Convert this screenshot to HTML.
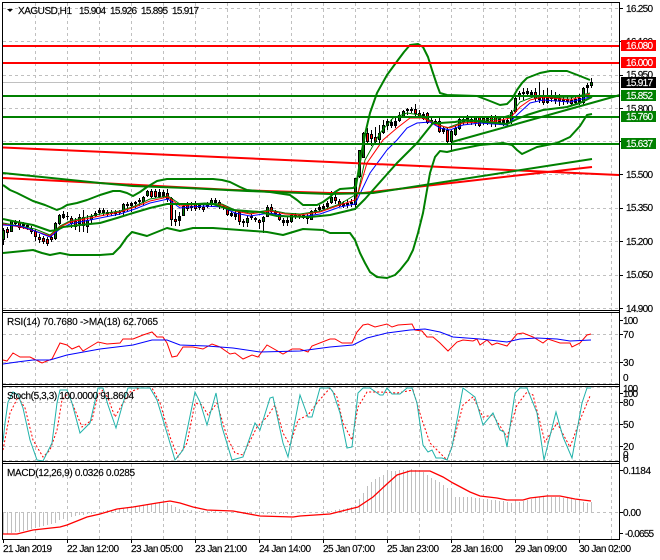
<!DOCTYPE html>
<html><head><meta charset="utf-8"><style>
html,body{margin:0;padding:0;background:#fff;width:660px;height:560px;overflow:hidden}
svg{display:block}
text{font-family:"Liberation Sans",sans-serif;font-size:10px;fill:#000;stroke:#000;stroke-width:.15}
.w{fill:#fff;stroke:#fff}
</style></head><body>
<svg width="660" height="560" viewBox="0 0 660 560" xmlns="http://www.w3.org/2000/svg">
<rect width="660" height="560" fill="#fff"/>
<!-- grid -->
<g fill="none" stroke="#c0c0c0" stroke-dasharray="3 3" shape-rendering="crispEdges">
<path d="M35.5 3V310M67.5 3V310M99.5 3V310M131.5 3V310M163.5 3V310M195.5 3V310M227.5 3V310M259.5 3V310M291.5 3V310M323.5 3V310M355.5 3V310M387.5 3V310M419.5 3V310M451.5 3V310M483.5 3V310M515.5 3V310M547.5 3V310M579.5 3V310M611.5 3V310"/>
<path d="M35.5 313V384M67.5 313V384M99.5 313V384M131.5 313V384M163.5 313V384M195.5 313V384M227.5 313V384M259.5 313V384M291.5 313V384M323.5 313V384M355.5 313V384M387.5 313V384M419.5 313V384M451.5 313V384M483.5 313V384M515.5 313V384M547.5 313V384M579.5 313V384M611.5 313V384"/>
<path d="M35.5 387V461M67.5 387V461M99.5 387V461M131.5 387V461M163.5 387V461M195.5 387V461M227.5 387V461M259.5 387V461M291.5 387V461M323.5 387V461M355.5 387V461M387.5 387V461M419.5 387V461M451.5 387V461M483.5 387V461M515.5 387V461M547.5 387V461M579.5 387V461M611.5 387V461"/>
<path d="M35.5 464V539M67.5 464V539M99.5 464V539M131.5 464V539M163.5 464V539M195.5 464V539M227.5 464V539M259.5 464V539M291.5 464V539M323.5 464V539M355.5 464V539M387.5 464V539M419.5 464V539M451.5 464V539M483.5 464V539M515.5 464V539M547.5 464V539M579.5 464V539M611.5 464V539"/>
<path d="M3 8.5H619M3 41.5H619M3 75.5H619M3 108.5H619M3 141.5H619M3 174.5H619M3 208.5H619M3 241.5H619M3 275.5H619M3 308.5H619"/>
<path d="M3 334.5H619M3 362.5H619M3 383.5H619"/>
<path d="M3 402.5H619M3 424.5H619M3 446.5H619M3 387.5H619M3 460.5H619"/>
<path d="M3 512.5H619"/>
</g>
<path d="M3 82.5H619" stroke="#c0c0c0" fill="none" shape-rendering="crispEdges"/>
<!-- candles wicks -->
<path shape-rendering="crispEdges" stroke="#000" fill="none" d="M3.5 228V245M7.5 227V238M11.5 220V232M15.5 220V226M19.5 220V230M23.5 222V229M27.5 223V230M31.5 226V234M35.5 229V241M39.5 234V243M43.5 236V244M47.5 237V246M51.5 235V242M55.5 222V240M59.5 214V225M63.5 211V219M67.5 212V220M71.5 216V228M75.5 218V230M79.5 214V232M83.5 210V232M87.5 215V233M91.5 214V224M95.5 211V217M99.5 208V215M103.5 208V216M107.5 210V217M111.5 210V216M115.5 210V216M119.5 210V215M123.5 203V217M127.5 202V212M131.5 202V212M135.5 201V208M139.5 198V206M143.5 196V205M147.5 190V197M151.5 189V198M155.5 189V198M159.5 189V198M163.5 190V198M167.5 189V202M171.5 197V226M175.5 210V226M179.5 212V226M183.5 204V216M187.5 202V211M191.5 202V211M195.5 201V211M199.5 203V210M203.5 205V212M207.5 202V208M211.5 198V207M215.5 198V205M219.5 200V209M223.5 205V210M227.5 206V216M231.5 211V217M235.5 211V220M239.5 210V225M243.5 219V227M247.5 216V227M251.5 214V220M255.5 217V222M259.5 219V229M263.5 216V233M267.5 205V217M271.5 204V214M275.5 210V216M279.5 212V221M283.5 218V226M287.5 217V226M291.5 214V223M295.5 213V219M299.5 214V219M303.5 214V219M307.5 214V224M311.5 210V220M315.5 208V214M319.5 205V212M323.5 204V210M327.5 201V208M331.5 191V204M335.5 191V204M339.5 199V207M343.5 201V208M347.5 200V208M351.5 199V207M355.5 178V210M359.5 150V178M363.5 132V158M367.5 128V145M371.5 130V146M375.5 127V144M379.5 125V143M383.5 120V134M387.5 119V130M391.5 119V128M395.5 117V128M399.5 112V122M403.5 110V118M407.5 108V115M411.5 107V113M415.5 104V116M419.5 110V118M423.5 112V120M427.5 112V124M431.5 118V124M435.5 119V125M439.5 118V133M443.5 126V134M447.5 128V144M451.5 130V152M455.5 126V136M459.5 118V130M463.5 116V125M467.5 115V124M471.5 117V125M475.5 116V126M479.5 116V127M483.5 116V125M487.5 116V125M491.5 115V127M495.5 115V127M499.5 117V125M503.5 118V126M507.5 118V126M511.5 110V124M515.5 97V113M519.5 91V100M523.5 88V100M527.5 88V97M531.5 90V98M535.5 88V102M539.5 82V103M543.5 90V105M547.5 88V104M551.5 90V102M555.5 92V104M559.5 94V106M563.5 95V105M567.5 95V104M571.5 96V105M575.5 95V105M579.5 94V105M583.5 87V105M587.5 83V93M591.5 78V88"/>
<!-- candle bodies -->
<path shape-rendering="crispEdges" stroke="#000" stroke-width="3" fill="none" d="M3.5 230V240M7.5 229V233M11.5 221V232M15.5 222V224M19.5 222V228M23.5 224V226M27.5 225V227M31.5 228V232M35.5 231V237M39.5 237V240M43.5 238V242M47.5 239V244M51.5 237V240M55.5 223V239M59.5 215V224M63.5 214V218M67.5 216V217M71.5 218V224M75.5 221V227M79.5 217V224M83.5 217V226M87.5 220V227M91.5 216V220M95.5 213V216M99.5 210V213M103.5 210V213M107.5 212V214M111.5 212V214M115.5 212V214M119.5 212V213M123.5 204V212M127.5 204V206M131.5 203V206M135.5 202V204M139.5 200V202M143.5 197V202M147.5 191V196M151.5 191V197M155.5 191V197M159.5 192V197M163.5 192V197M167.5 193V199M171.5 198V220M175.5 219V222M179.5 216V221M183.5 206V216M187.5 205V209M191.5 206V208M195.5 204V209M199.5 205V208M203.5 207V210M207.5 204V207M211.5 200V205M215.5 200V203M219.5 202V207M223.5 206V208M227.5 207V215M231.5 213V216M235.5 213V217M239.5 212V222M243.5 221V223M247.5 218V223M251.5 216V218M255.5 218V220M259.5 220V223M263.5 217V222M267.5 207V217M271.5 207V212M275.5 211V214M279.5 214V220M283.5 220V223M287.5 220V223M291.5 215V222M295.5 215V217M299.5 215V217M303.5 215V218M307.5 217V219M311.5 211V220M315.5 210V213M319.5 207V210M323.5 206V209M327.5 203V207M331.5 197V203M335.5 197V201M339.5 201V206M343.5 203V206M347.5 203V205M351.5 202V204M355.5 178V205M359.5 150V177M363.5 133V158M367.5 133V142M371.5 134V139M375.5 137V142M379.5 133V140M383.5 125V133M387.5 121V126M391.5 122V126M395.5 121V126M399.5 115V121M403.5 111V117M407.5 109V111M411.5 109V111M415.5 109V114M419.5 113V117M423.5 114V119M427.5 113V123M431.5 120V122M435.5 121V123M439.5 121V132M443.5 128V132M447.5 130V142M451.5 131V142M455.5 128V135M459.5 119V129M463.5 119V122M467.5 118V121M471.5 119V122M475.5 117V123M479.5 117V126M483.5 118V123M487.5 118V123M491.5 116V123M495.5 116V124M499.5 118V123M503.5 120V123M507.5 120V123M511.5 112V122M515.5 98V112M519.5 93V97M523.5 92V94M527.5 91V94M531.5 92V96M535.5 92V99M539.5 95V100M543.5 95V103M547.5 96V103M551.5 95V99M555.5 97V101M559.5 98V101M563.5 99V101M567.5 99V102M571.5 100V104M575.5 99V103M579.5 98V103M583.5 88V103M587.5 85V88M591.5 82V86"/>
<path shape-rendering="crispEdges" stroke="#008000" fill="none" d="M3.5 231V239M11.5 222V231M55.5 224V238M59.5 216V223M79.5 218V223M87.5 221V226M91.5 217V219M123.5 205V211M143.5 198V201M147.5 192V195M183.5 207V215M211.5 201V204M247.5 219V222M263.5 218V221M267.5 208V216M291.5 216V221M311.5 212V219M331.5 198V202M355.5 179V204M359.5 151V176M363.5 134V157M379.5 134V139M383.5 126V132M399.5 116V120M403.5 112V116M451.5 132V141M455.5 129V134M459.5 120V128M475.5 118V122M511.5 113V121M515.5 99V111M519.5 94V96M583.5 89V102M591.5 83V85"/>
<path shape-rendering="crispEdges" stroke="#ff0000" fill="none" d="M7.5 230V232M19.5 223V227M31.5 229V231M35.5 232V236M39.5 238V239M43.5 239V241M47.5 240V243M51.5 238V239M71.5 219V223M75.5 222V226M83.5 218V225M151.5 192V196M155.5 192V196M167.5 194V198M171.5 199V219M175.5 220V221M187.5 206V208M195.5 205V208M203.5 208V209M219.5 203V206M227.5 208V214M239.5 213V221M259.5 221V222M271.5 208V211M279.5 215V219M335.5 198V200M339.5 202V205M367.5 134V141M371.5 135V138M375.5 138V141M415.5 110V113M419.5 114V116M427.5 114V122M439.5 122V131M447.5 131V141M479.5 118V125M483.5 119V122M491.5 117V122M495.5 117V123M535.5 93V98M543.5 96V102M551.5 96V98M559.5 99V100M571.5 101V103"/>
<!-- MAs -->
<g fill="none" stroke-width="1">
<path stroke="#008000" d="M3 223L20 226L35 229L50 235L60 226L70 221L100 214L120 211L135 206L150 199L168 196L180 204L190 204L205 203L222 204L235 210L250 213L270 210L285 213L300 214L320 211L340 204L355 195L358 193L365 160L380 133L393 118L407 113L420 115L433 122L447 128L463 122L497 119L510 115L520 102L533 97L543 97L570 98L590 93"/>
<path stroke="#ff0000" d="M3 224L20 227L35 231L50 236L60 227L70 222L100 216L120 212L135 207L150 201L168 197L180 206L190 205L205 204L222 205L235 211L250 214L270 211L285 214L300 215L320 212L340 205L355 200L357 197L367 163L383 140L397 128L410 118L423 118L437 125L450 128L463 123L497 121L510 118L520 107L530 100L543 97L570 100L590 94"/>
<path stroke="#0000ff" d="M3 225L20 226L35 231L50 237L60 229L70 224L100 218L120 214L135 209L150 203L168 199L180 208L190 207L205 206L222 207L235 213L250 216L270 213L285 216L300 217L320 214L340 207L355 204L357 200L370 173L387 150L397 140L407 128L417 123L430 122L440 128L450 130L463 125L480 123L507 125L517 115L530 103L543 100L570 102L590 97"/>
</g>
<!-- trend + BB -->
<g fill="none" stroke-width="2" stroke-linejoin="round">
<path stroke="#ff0000" d="M3 147.500L330 162L619 175"/>
<path stroke="#ff0000" d="M3 178L100 183L233 190L330 193L363 193L592 167"/>
<path stroke="#008000" d="M3 173L100 183L133 186L187 188L247 191L330 194L373 193L592 159"/>
<path stroke="#008000" d="M452 142L620 95"/>
<path stroke="#008000" d="M3 185L10 190L17 193L25 197L33 201L45 205L57 210L62 208L67 205L77 203L87 200L100 195L113 191L120 191L127 193L133 196L140 192L147 187L157 181L167 179L177 179L213 179L222 180L230 182L240 187L247 190L270 192L290 195L297 200L303 205L317 205L323 202L330 197L335 192L340 189L353 188L356 186L359 168L362 150L366 130L370 113L377 93L387 75L398 60L404 52L410 45L418 44L423 47L428 57L432 70L437 85L440 93L447 95L477 96L490 101L500 105L507 104L512 99L517 90L522 83L527 78L540 73L550 71L567 71L580 76L590 80"/>
<path stroke="#008000" d="M3 219L17 222L33 225L50 231L57 230L63 227L80 225L100 223L117 218L133 213L150 208L167 204L213 204L225 208L233 210L260 212L277 216L310 217L330 215L355 209L365 199L373 190L397 163L417 143L433 123L440 123L455 122L465 120L507 124L517 119L527 115L543 110L567 107L580 103L592 97"/>
<path stroke="#008000" d="M3 253L13 252L33 250L42 253L50 255L60 253L70 255L100 255L113 254L120 247L127 237L132 232L147 236L167 228L180 231L193 228L213 228L267 232L283 235L303 229L323 230L330 233L350 233L355 240L360 253L365 263L370 272L377 277L387 278L395 275L400 270L408 260L413 250L418 233L423 213L427 190L430 173L435 157L440 151L447 152L455 150L480 145L503 143L512 145L517 150L522 154L537 147L557 143L570 137L580 126L587 115L592 114"/>
</g>
<g fill="none" stroke-width="2" shape-rendering="crispEdges">
<path stroke="#ff0000" d="M3 46H619M3 63H619"/>
<path stroke="#008000" d="M3 96H619M3 117H619M3 144H619"/>
</g>
<!-- RSI -->
<g fill="none">
<path stroke="#ff0000" d="M3 360L7 361L13 353L20 357L30 357L42 363L52 359L60 343L67 345L72 349L79 346L83 351L98 342L107 344L120 343L123 339L133 339L143 335L152 332L157 337L163 337L167 343L172 357L177 356L183 347L193 347L203 349L212 344L220 347L230 354L235 353L243 359L252 355L258 357L267 345L283 354L292 349L300 349L308 352L312 346L330 339L335 339L342 343L352 343L357 332L363 325L368 324L375 327L387 324L392 327L398 325L412 324L415 330L422 331L427 337L433 337L440 343L448 351L457 342L463 340L473 341L477 339L480 345L487 340L492 345L497 343L507 346L517 334L523 333L533 337L543 343L548 339L560 343L570 343L572 347L580 343L587 335L591 334"/>
<path stroke="#0000ff" d="M3 364L17 362L33 360L50 360L67 355L100 349L133 345L152 340L167 340L180 345L207 346L233 348L260 352L300 351L330 347L353 345L367 338L387 333L410 330L425 329L440 332L453 337L480 339L507 342L520 339L537 338L557 339L570 341L591 340"/>
</g>
<!-- Stoch -->
<g fill="none">
<path stroke="#ff0000" stroke-dasharray="2 2" d="M3 450L10 413L18 397L25 408L33 440L43 457L50 450L57 430L62 400L68 393L75 410L82 427L92 420L98 395L103 390L108 398L115 417L123 403L130 392L140 388L152 388L160 403L170 437L178 457L187 443L195 403L202 405L208 415L217 403L227 437L235 453L243 455L257 427L267 417L275 405L283 433L290 445L298 420L308 415L317 403L330 388L337 397L343 423L352 440L358 407L367 392L380 392L397 393L413 390L422 420L430 443L447 460L453 443L463 405L473 397L483 417L493 415L507 437L517 405L527 392L533 395L545 442L557 423L570 447L580 420L590 396"/>
<path stroke="#20b2aa" d="M3 442L5 423L8 402L13 392L18 395L23 408L30 440L37 460L43 461L52 443L57 403L60 390L67 390L72 403L80 433L90 423L98 388L103 388L108 405L116 428L123 403L128 388L150 388L157 400L167 433L175 460L183 450L195 392L200 402L207 425L216 393L222 427L232 460L243 457L255 423L260 430L270 398L273 397L283 443L288 457L300 395L308 417L312 417L320 388L330 388L333 392L340 413L347 448L352 447L358 393L363 388L370 388L380 395L383 395L387 388L392 394L400 394L407 388L412 388L417 403L423 445L428 452L432 450L436 458L442 458L447 460L452 447L463 388L475 397L483 425L493 413L500 430L504 432L507 447L515 393L520 388L527 388L537 413L544 460L556 412L563 437L572 458L582 403L587 388L591 388"/>
</g>
<!-- MACD bars -->
<path shape-rendering="crispEdges" stroke="#c0c0c0" fill="none" d="M3.500 512V534M7.500 512V534M11.500 512V533M15.500 512V532M19.500 512V532M23.500 512V531M27.500 512V530M31.500 512V529M35.500 512V528M39.500 512V527M43.500 512V526M47.500 512V525M51.500 512V524M55.500 512V523M59.500 512V520M63.500 512V519M67.500 512V518M71.500 512V517M75.500 512V516M79.500 512V515M83.500 512V515M87.500 512V514M91.500 512V514M95.500 512V513M103.500 512V511M107.500 512V510M111.500 512V510M115.500 512V509M119.500 512V509M123.500 512V508M127.500 512V508M131.500 512V507M135.500 512V507M139.500 512V506M143.500 512V505M147.500 512V505M151.500 512V504M155.500 512V503M159.500 512V502M163.500 512V501M167.500 512V503M171.500 512V505M175.500 512V507M179.500 512V509M183.500 512V510M187.500 512V510M191.500 512V510M195.500 512V511M199.500 512V511M203.500 512V511M207.500 512V511M211.500 512V511M215.500 512V511M243.500 512V514M247.500 512V514M251.500 512V514M255.500 512V514M259.500 512V514M263.500 512V514M267.500 512V514M271.500 512V514M275.500 512V514M279.500 512V514M283.500 512V514M287.500 512V514M323.500 512V511M327.500 512V511M331.500 512V511M335.500 512V510M339.500 512V509M343.500 512V509M347.500 512V508M351.500 512V507M355.500 512V505M359.500 512V499M363.500 512V493M367.500 512V486M371.500 512V482M375.500 512V479M379.500 512V477M383.500 512V475M387.500 512V471M391.500 512V471M395.500 512V471M399.500 512V470M403.500 512V470M407.500 512V470M411.500 512V469M415.500 512V470M419.500 512V470M423.500 512V472M427.500 512V475M431.500 512V478M435.500 512V480M439.500 512V482M443.500 512V485M447.500 512V488M451.500 512V491M455.500 512V497M459.500 512V497M463.500 512V497M467.500 512V497M471.500 512V497M475.500 512V498M479.500 512V498M483.500 512V499M487.500 512V499M491.500 512V500M495.500 512V500M499.500 512V501M503.500 512V501M507.500 512V502M511.500 512V503M515.500 512V503M519.500 512V502M523.500 512V501M527.500 512V500M531.500 512V499M535.500 512V498M539.500 512V497M543.500 512V496M547.500 512V496M551.500 512V497M555.500 512V497M559.500 512V497M563.500 512V498M567.500 512V498M571.500 512V499M575.500 512V500M579.500 512V501M583.500 512V502M587.500 512V503M591.500 512V502"/>
<path fill="none" stroke="#ff0000" stroke-width="1.300" d="M3 534L17 534L33 530L60 527L67 525L87 517L100 514L117 509L133 507L157 503L170 501L180 503L193 507L207 510L233 511L260 516L293 517L300 516L330 514L358 507L373 497L388 483L397 475L410 471L430 471L443 477L453 483L470 492L480 496L497 498L507 500L523 500L530 498L547 496L560 496L575 499L591 501"/>
<!-- frames -->
<g fill="none" stroke="#000" shape-rendering="crispEdges">
<path d="M2.500 2.500H619.500V539.500H2.500Z"/>
<path d="M2 310.500H620M2 312.500H620M2 384.500H620M2 386.500H620M2 461.500H620M2 463.500H620"/>
<path d="M620 8.500H623M620 41.500H623M620 75.500H623M620 108.500H623M620 141.500H623M620 174.500H623M620 208.500H623M620 241.500H623M620 275.500H623M620 308.500H623M620 334.500H623M620 362.500H623M620 320.500H623M620 402.500H623M620 424.500H623M620 446.500H623M620 393.500H623M620 470.500H623M620 512.500H623M620 533.500H623"/>
<path d="M3.500 540V543M67.500 540V543M131.500 540V543M195.500 540V543M259.500 540V543M323.500 540V543M387.500 540V543M451.500 540V543M515.500 540V543M579.500 540V543"/>
</g>
<!-- title -->
<path d="M7 9H13L10 12Z" fill="#000"/>
<text x="18" y="14" textLength="54" lengthAdjust="spacing">XAGUSD,H1</text>
<text x="79" y="14" textLength="27" lengthAdjust="spacing">15.904</text>
<text x="110" y="14" textLength="27" lengthAdjust="spacing">15.926</text>
<text x="141" y="14" textLength="27" lengthAdjust="spacing">15.895</text>
<text x="172" y="14" textLength="27" lengthAdjust="spacing">15.917</text>
<text x="7" y="325" textLength="151" lengthAdjust="spacing">RSI(14) 70.7680  -&gt;MA(18) 62.7065</text>
<text x="7" y="399" textLength="127" lengthAdjust="spacing">Stoch(5,3,3) 100.0000 91.8604</text>
<text x="7" y="476" textLength="128" lengthAdjust="spacing">MACD(12,26,9) 0.0326 0.0285</text>
<!-- right axis -->
<text x="626" y="12" textLength="27" lengthAdjust="spacing">16.250</text>
<text x="626" y="45" textLength="27" lengthAdjust="spacing">16.100</text>
<text x="626" y="78" textLength="27" lengthAdjust="spacing">15.950</text>
<text x="626" y="112" textLength="27" lengthAdjust="spacing">15.800</text>
<text x="626" y="178" textLength="27" lengthAdjust="spacing">15.500</text>
<text x="626" y="211" textLength="27" lengthAdjust="spacing">15.350</text>
<text x="626" y="245" textLength="27" lengthAdjust="spacing">15.200</text>
<text x="626" y="278" textLength="27" lengthAdjust="spacing">15.050</text>
<text x="626" y="312" textLength="27" lengthAdjust="spacing">14.900</text>
<rect x="621" y="40" width="35" height="11" fill="#ff0000"/><text class="w" x="626" y="49" textLength="27" lengthAdjust="spacing">16.080</text>
<rect x="621" y="57" width="35" height="11" fill="#ff0000"/><text class="w" x="626" y="66" textLength="27" lengthAdjust="spacing">16.000</text>
<rect x="621" y="77" width="35" height="11" fill="#000"/><text class="w" x="626" y="86" textLength="27" lengthAdjust="spacing">15.917</text>
<rect x="621" y="90" width="35" height="11" fill="#008000"/><text class="w" x="626" y="99" textLength="27" lengthAdjust="spacing">15.852</text>
<rect x="621" y="111" width="35" height="11" fill="#008000"/><text class="w" x="626" y="120" textLength="27" lengthAdjust="spacing">15.760</text>
<rect x="621" y="138" width="35" height="11" fill="#008000"/><text class="w" x="626" y="147" textLength="27" lengthAdjust="spacing">15.637</text>
<text x="623" y="324" textLength="15" lengthAdjust="spacing">100</text>
<text x="623" y="338" textLength="11" lengthAdjust="spacing">70</text>
<text x="623" y="366" textLength="11" lengthAdjust="spacing">30</text>
<text x="623" y="381">0</text>
<text x="623" y="392" textLength="15" lengthAdjust="spacing">100</text>
<text x="623" y="397" textLength="15" lengthAdjust="spacing">100</text>
<text x="623" y="406" textLength="11" lengthAdjust="spacing">80</text>
<text x="623" y="428" textLength="11" lengthAdjust="spacing">50</text>
<text x="623" y="450" textLength="11" lengthAdjust="spacing">20</text>
<text x="623" y="458">0</text>
<text x="623" y="462">0</text>
<text x="623" y="474" textLength="28" lengthAdjust="spacing">0.1184</text>
<text x="623" y="516" textLength="18" lengthAdjust="spacing">0.00</text>
<text x="625" y="537" textLength="29" lengthAdjust="spacing">-0.0655</text>
<!-- bottom axis -->
<text x="3" y="552" textLength="49" lengthAdjust="spacing">21 Jan 2019</text>
<text x="67" y="552" textLength="52" lengthAdjust="spacing">22 Jan 12:00</text>
<text x="131" y="552" textLength="52" lengthAdjust="spacing">23 Jan 05:00</text>
<text x="195" y="552" textLength="52" lengthAdjust="spacing">23 Jan 21:00</text>
<text x="259" y="552" textLength="52" lengthAdjust="spacing">24 Jan 14:00</text>
<text x="323" y="552" textLength="52" lengthAdjust="spacing">25 Jan 07:00</text>
<text x="387" y="552" textLength="52" lengthAdjust="spacing">25 Jan 23:00</text>
<text x="451" y="552" textLength="52" lengthAdjust="spacing">28 Jan 16:00</text>
<text x="515" y="552" textLength="52" lengthAdjust="spacing">29 Jan 09:00</text>
<text x="579" y="552" textLength="52" lengthAdjust="spacing">30 Jan 02:00</text>
</svg>
</body></html>
